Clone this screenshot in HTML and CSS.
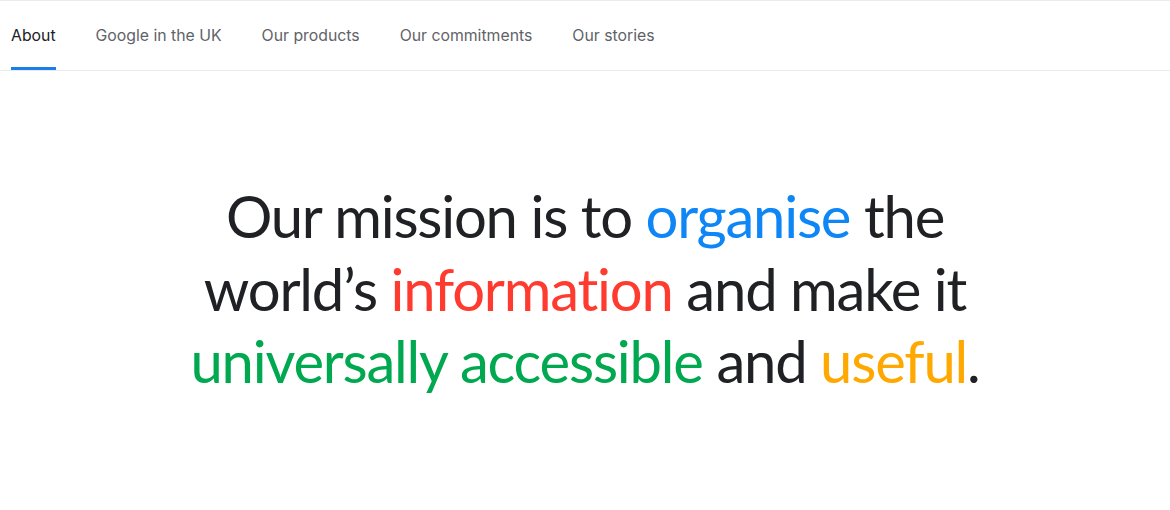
FILE: index.html
```html
<!DOCTYPE html>
<html lang="en">
<head>
<meta charset="utf-8">
<link rel="stylesheet" href="styles.css">
</head>
<body>
<nav class="tabs">
  <a class="tab active">About</a>
  <a class="tab">Google in the UK</a>
  <a class="tab">Our products</a>
  <a class="tab">Our commitments</a>
  <a class="tab">Our stories</a>
</nav>
<main class="hero">
  <h1 class="mission">Our mission is to <span class="blue">organise</span> the<br>world’s <span class="red">information</span> and make it<br><span class="green">universally accessible</span> and <span class="yellow">useful</span>.</h1>
</main>
</body>
</html>
```
FILE: styles.css
```css
html, body { margin: 0; padding: 0; background: #fff; }
body { font-family: Inter, "Noto Sans", sans-serif; color: #202124; border-top: 1px solid #ececec; }
.tabs { display: flex; gap: 40px; padding: 0 11px; border-bottom: 1px solid #e8eaed; height: 69px; align-items: stretch; }
.tab { display: flex; align-items: center; font-size: 15.8px; color: #5f6368; border-bottom: 3px solid transparent; padding-top: 3px; }
.tab.active { color: #202124; border-bottom-color: #1a7ee8; }
.hero { display: flex; justify-content: center; padding-top: 109px; }
.mission { margin: 0; font-family: Lato, "Noto Sans", sans-serif; font-variant-ligatures: none; font-weight: 400; font-size: 58px; line-height: 72.5px; text-align: center; letter-spacing: -1.2px; }
.blue { color: #0e86f5; }
.red { color: #ff3b30; }
.green { color: #00a84f; }
.yellow { color: #ffa800; }
```
